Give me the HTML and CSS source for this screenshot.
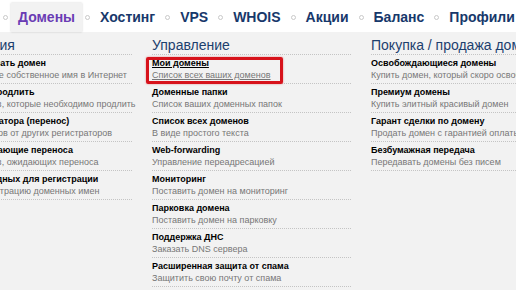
FILE: index.html
```
<!DOCTYPE html>
<html>
    <head>
        <meta charset="UTF-8" />
        <title>Домены</title>
        <link rel="stylesheet" href="styles.css">
    </head>
    <body>
        <!-- Top menu -->
        <div class="nav">
            <span class="dot"></span>
            <a class="tab active" href="#">Домены</a>
            <span class="dot"></span>
            <a class="tab" href="#">Хостинг</a>
            <span class="dot"></span>
            <a class="tab" href="#">VPS</a>
            <span class="dot"></span>
            <a class="tab" href="#">WHOIS</a>
            <span class="dot"></span>
            <a class="tab" href="#">Акции</a>
            <span class="dot"></span>
            <a class="tab" href="#">Баланс</a>
            <span class="dot"></span>
            <a class="tab" href="#">Профили</a>
        </div>

        <!-- Submenu -->
        <div class="submenu">
            <div class="col">
                <div class="col-title">Регистрация</div>
                <a class="item" href="#">
                    <span class="item-name">Зарегистрировать домен</span>
                    <span class="item-desc">Зарегистрируйте собственное имя в Интернет</span>
                </a>
                <a class="item" href="#">
                    <span class="item-name">Необходимо продлить</span>
                    <span class="item-desc">Список доменов, которые необходимо продлить</span>
                </a>
                <a class="item" href="#">
                    <span class="item-name">Смена регистратора (перенос)</span>
                    <span class="item-desc">Перенос доменов от других регистраторов</span>
                </a>
                <a class="item" href="#">
                    <span class="item-name">Домены, ожидающие переноса</span>
                    <span class="item-desc">Список доменов, ожидающих переноса</span>
                </a>
                <a class="item" href="#">
                    <span class="item-name">Подбор свободных для регистрации</span>
                    <span class="item-desc">Заявки на регистрацию доменных имен</span>
                </a>
            </div>

            <div class="col">
                <div class="col-title">Управление</div>
                <a class="item selected" href="#">
                    <span class="item-name">Мои домены</span>
                    <span class="item-desc">Список всех ваших доменов</span>
                </a>
                <a class="item" href="#">
                    <span class="item-name">Доменные папки</span>
                    <span class="item-desc">Список ваших доменных папок</span>
                </a>
                <a class="item" href="#">
                    <span class="item-name">Список всех доменов</span>
                    <span class="item-desc">В виде простого текста</span>
                </a>
                <a class="item" href="#">
                    <span class="item-name">Web-forwarding</span>
                    <span class="item-desc">Управление переадресацией</span>
                </a>
                <a class="item" href="#">
                    <span class="item-name">Мониторинг</span>
                    <span class="item-desc">Поставить домен на мониторинг</span>
                </a>
                <a class="item" href="#">
                    <span class="item-name">Парковка домена</span>
                    <span class="item-desc">Поставить домен на парковку</span>
                </a>
                <a class="item" href="#">
                    <span class="item-name">Поддержка ДНС</span>
                    <span class="item-desc">Заказать DNS сервера</span>
                </a>
                <a class="item" href="#">
                    <span class="item-name">Расширенная защита от спама</span>
                    <span class="item-desc">Защитить свою почту от спама</span>
                </a>
            </div>

            <div class="col">
                <div class="col-title">Покупка / продажа доменов</div>
                <a class="item" href="#">
                    <span class="item-name">Освобождающиеся домены</span>
                    <span class="item-desc">Купить домен, который скоро освободится</span>
                </a>
                <a class="item" href="#">
                    <span class="item-name">Премиум домены</span>
                    <span class="item-desc">Купить элитный красивый домен</span>
                </a>
                <a class="item" href="#">
                    <span class="item-name">Гарант сделки по домену</span>
                    <span class="item-desc">Продать домен с гарантией оплаты</span>
                </a>
                <a class="item" href="#">
                    <span class="item-name">Безбумажная передача</span>
                    <span class="item-desc">Передавать домены без писем</span>
                </a>
            </div>
        </div>
    </body>
</html>
```

FILE: styles.css
```
body {
    margin: 0;
    width: 516px;
    height: 290px;
    overflow: hidden;
    font-family: "Liberation Sans", Arial, sans-serif;
    background-color: #f2f2f2;
}

.nav {
    display: flex;
    align-items: flex-start;
    height: 32px;
    background-color: #fff;
    white-space: nowrap;
}

.tab {
    margin-top: 3px;
    padding: 0 7px;
    line-height: 29px;
    font-size: 14px;
    font-weight: bold;
    color: #17386b;
    text-decoration: none;
}

.tab.active {
    color: #6a3cb4;
    background-color: #f2f2f2;
    box-shadow: 0 0 2px rgba(0, 0, 0, 0.18);
    height: 29px;
}

.dot {
    flex: none;
    width: 3px;
    height: 3px;
    margin: 15px 3px 0;
    border: 1px solid #c9c9c9;
    border-radius: 50%;
}

.submenu {
    display: flex;
    gap: 20px;
    margin-left: -67px;
}

.col {
    flex: none;
    width: 199px;
}

.col-title {
    margin-top: 4px;
    line-height: 18px;
    font-size: 14px;
    color: #1d3f6e;
    white-space: nowrap;
    border-bottom: 1px dotted #c4c4c4;
}

.item {
    display: block;
    position: relative;
    padding: 2px 0;
    border-bottom: 1px dotted #c4c4c4;
    font-size: 9px;
    line-height: 12px;
    text-decoration: none;
    white-space: nowrap;
}

.item-name {
    display: block;
    font-weight: bold;
    color: #000;
}

.item-desc {
    display: block;
    color: #777;
}

.item.selected .item-name,
.item.selected .item-desc {
    text-decoration: underline;
}

/* red highlight around the current item */
.item.selected::after {
    content: "";
    position: absolute;
    left: -6px;
    top: 2px;
    width: 131px;
    height: 21px;
    border: 3px solid #d7121b;
    border-radius: 2px;
    box-shadow: 0 0 2px rgba(215, 18, 27, 0.5);
}
```
